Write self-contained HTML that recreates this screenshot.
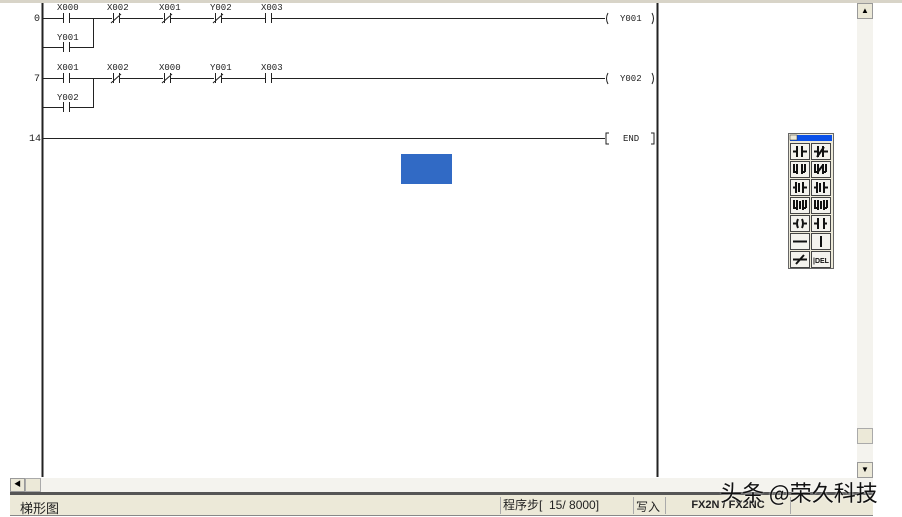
<!DOCTYPE html>
<html><head><meta charset="utf-8"><style>
html,body{margin:0;padding:0;width:902px;height:517px;overflow:hidden;background:#fff;font-family:"Liberation Sans","Noto Sans CJK SC",sans-serif}
.abs{position:absolute}
</style></head><body>
<div class="abs" style="left:0;top:0;width:902px;height:3px;background:#d8d4c8"></div>
<svg class="abs" style="left:0;top:0" width="902" height="517">
<g font-family="Liberation Mono, monospace" font-size="9" fill="#222" stroke="none">
<text x="34" y="21" font-size="10">0</text>
<text x="34" y="81" font-size="10">7</text>
<text x="29" y="141" font-size="10">14</text>
<text x="57" y="10">X000</text><text x="107" y="10">X002</text><text x="159" y="10">X001</text><text x="210" y="10">Y002</text><text x="261" y="10">X003</text>
<text x="57" y="40">Y001</text>
<text x="57" y="70">X001</text><text x="107" y="70">X002</text><text x="159" y="70">X000</text><text x="210" y="70">Y001</text><text x="261" y="70">X003</text>
<text x="57" y="100">Y002</text>
<text x="620" y="21">Y001</text><text x="620" y="81">Y002</text><text x="623" y="141">END</text>
</g>
<g stroke="#222" stroke-width="1" fill="none">
<line x1="42.5" y1="3" x2="42.5" y2="477" stroke-width="2"/>
<line x1="657.5" y1="3" x2="657.5" y2="477" stroke-width="2"/>
<path d="M43 18.5H63M69 18.5H112M120 18.5H163M171 18.5H214M222 18.5H265M271 18.5H605"/>
<path d="M63.5 13v10M69.5 13v10M265.5 13v10M271.5 13v10"/>
<path d="M113.5 13v10M119.5 13v10M111 23l10-9M164.5 13v10M170.5 13v10M162 23l10-9M215.5 13v10M221.5 13v10M213 23l10-9"/>
<path d="M43 47.5H63M69 47.5H93.5V18.5M63.5 42v10M69.5 42v10"/>
<path d="M43 78.5H63M69 78.5H112M120 78.5H163M171 78.5H214M222 78.5H265M271 78.5H605"/>
<path d="M63.5 73v10M69.5 73v10M265.5 73v10M271.5 73v10"/>
<path d="M113.5 73v10M119.5 73v10M111 83l10-9M164.5 73v10M170.5 73v10M162 83l10-9M215.5 73v10M221.5 73v10M213 83l10-9"/>
<path d="M43 107.5H63M69 107.5H93.5V78.5M63.5 102v10M69.5 102v10"/>
<path d="M43 138.5H605"/>
<path d="M608 13q-3 5.5 0 11M652 13q3 5.5 0 11M608 73q-3 5.5 0 11M652 73q3 5.5 0 11"/>
<path d="M609 133h-3v11h3M651 133h3v11h-3"/>
</g>
<rect x="401" y="154" width="51" height="30" fill="#316ac5"/>
<!-- palette -->
<g>
<rect x="788.5" y="133.5" width="45" height="135" fill="#ece9d8" stroke="#666"/>
<rect x="790" y="135" width="42" height="6" fill="#0a50e8"/>
<rect x="790" y="135" width="7" height="5" fill="#ece9d8" stroke="#333" stroke-width="0.5"/>
<g fill="#f4f3ee" stroke="#444">
<rect x="790.5" y="143.5" width="19" height="16"/><rect x="811.5" y="143.5" width="19" height="16"/>
<rect x="790.5" y="161.5" width="19" height="16"/><rect x="811.5" y="161.5" width="19" height="16"/>
<rect x="790.5" y="179.5" width="19" height="16"/><rect x="811.5" y="179.5" width="19" height="16"/>
<rect x="790.5" y="197.5" width="19" height="16"/><rect x="811.5" y="197.5" width="19" height="16"/>
<rect x="790.5" y="215.5" width="19" height="16"/><rect x="811.5" y="215.5" width="19" height="16"/>
<rect x="790.5" y="233.5" width="19" height="16"/><rect x="811.5" y="233.5" width="19" height="16"/>
<rect x="790.5" y="251.5" width="19" height="16"/><rect x="811.5" y="251.5" width="19" height="16"/>
</g>
<g stroke="#111" stroke-width="2" fill="none">
<path d="M793 151.5h4M797 146v11M802 146v11M802 151.5h5"/>
<path d="M814 151.5h4M818 146v11M823 146v11M823 151.5h5M817 157l7-10"/>
<path d="M794 164v8h3M797 164v10M802 164v10M802 172h3M805 164v8"/>
<path d="M815 164v8h3M818 164v10M823 164v10M823 172h3M826 164v8M817 173l6-8"/>
<path d="M793 187.5h3M796 182v11M799 183v9M803 182v11M803 187.5h4"/>
<path d="M814 187.5h3M817 182v11M820 183v9M824 182v11M824 187.5h4"/>
<path d="M794 200v8h3M797 200v10M800 201v8M803 200v10M803 208h3M806 200v8"/>
<path d="M815 200v8h3M818 200v10M821 201v8M824 200v10M824 208h3M827 200v8"/>
<path d="M793 223.5h3M798 219q-2 4.5 0 9M802 219q2 4.5 0 9M804 223.5h3"/>
<path d="M814 223.5h3M819 219h-1v9h1M823 219h1v9h-1M824 223.5h3"/>
<path d="M793 241.5h14M821 236v11"/>
<path d="M793 259.5h14M796 264l8-9"/>
</g>
<text x="813" y="263" font-family="Liberation Sans,sans-serif" font-size="7" font-weight="bold" fill="#111">|DEL</text>
</g>
</svg>
<div class="abs" style="left:857px;top:3px;width:16px;height:474px;background:#f4f3ee"></div>
<div class="abs" style="left:857px;top:3px;width:14px;height:14px;background:#ece9d8;border:1px solid #999;font-size:8px;text-align:center;line-height:14px">▲</div>
<div class="abs" style="left:857px;top:428px;width:14px;height:14px;background:#ece9d8;border:1px solid #aaa"></div>
<div class="abs" style="left:857px;top:462px;width:14px;height:14px;background:#ece9d8;border:1px solid #999;font-size:8px;text-align:center;line-height:14px">▼</div>
<div class="abs" style="left:10px;top:478px;width:863px;height:14px;background:#f4f3ee"></div>
<div class="abs" style="left:10px;top:478px;width:13px;height:12px;background:#ece9d8;border:1px solid #999;font-size:7px;line-height:12px;text-align:center">◀</div>
<div class="abs" style="left:25px;top:478px;width:14px;height:12px;background:#ece9d8;border:1px solid #aaa"></div>
<div class="abs" style="left:10px;top:492px;width:863px;height:3px;background:#555"></div>
<div class="abs" style="left:10px;top:495px;width:863px;height:20px;background:#ece9d8;border-bottom:1px solid #888"></div>
<div class="abs" style="left:20px;top:498px;font-size:13px;color:#222">梯形图</div>
<div class="abs" style="left:500px;top:497px;width:130px;height:17px;border-left:1px solid #aaa;border-right:1px solid #aaa;font-size:12px;line-height:17px;padding-left:2px;color:#222">程序步[&nbsp; 15/ 8000]</div>
<div class="abs" style="left:636px;top:498px;font-size:12px;color:#222">写入</div>
<div class="abs" style="left:665px;top:497px;width:124px;height:17px;border-left:1px solid #aaa;border-right:1px solid #aaa;font-size:11px;line-height:17px;text-align:center;color:#222;font-weight:bold">FX2N / FX2NC</div>
<div class="abs" style="left:720px;top:476px;font-size:22px;color:#111;font-family:'Noto Sans CJK SC',sans-serif;text-shadow:0 0 2px #fff">头条 @荣久科技</div>
</body></html>
